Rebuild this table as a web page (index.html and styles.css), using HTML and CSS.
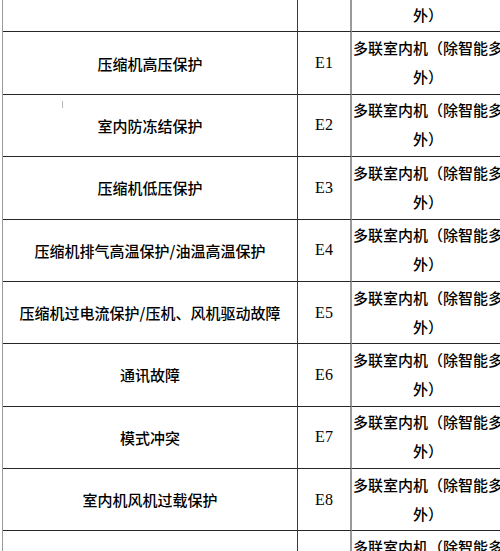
FILE: index.html
```html
<!DOCTYPE html>
<html lang="zh-CN">
<head>
<meta charset="utf-8">
<title>故障代码表</title>
<link rel="stylesheet" href="styles.css">
</head>
<body>
<div class="sheet">
  <div class="cell name"></div>
  <div class="cell code"></div>
  <div class="cell note">多联室内机（除智能多<br>外）</div>

  <div class="cell name">压缩机高压保护</div>
  <div class="cell code">E1</div>
  <div class="cell note">多联室内机（除智能多<br>外）</div>

  <div class="cell name mark">室内防冻结保护</div>
  <div class="cell code">E2</div>
  <div class="cell note">多联室内机（除智能多<br>外）</div>

  <div class="cell name">压缩机低压保护</div>
  <div class="cell code">E3</div>
  <div class="cell note">多联室内机（除智能多<br>外）</div>

  <div class="cell name">压缩机排气高温保护/油温高温保护</div>
  <div class="cell code">E4</div>
  <div class="cell note">多联室内机（除智能多<br>外）</div>

  <div class="cell name">压缩机过电流保护/压机、风机驱动故障</div>
  <div class="cell code">E5</div>
  <div class="cell note">多联室内机（除智能多<br>外）</div>

  <div class="cell name">通讯故障</div>
  <div class="cell code">E6</div>
  <div class="cell note">多联室内机（除智能多<br>外）</div>

  <div class="cell name">模式冲突</div>
  <div class="cell code">E7</div>
  <div class="cell note">多联室内机（除智能多<br>外）</div>

  <div class="cell name">室内机风机过载保护</div>
  <div class="cell code">E8</div>
  <div class="cell note">多联室内机（除智能多<br>外）</div>

  <div class="cell name"></div>
  <div class="cell code"></div>
  <div class="cell note">多联室内机（除智能多<br>外）</div>
</div>
</body>
</html>
```

FILE: styles.css
```css
html, body {
  margin: 0;
  padding: 0;
  overflow: hidden;
  background: #fff;
}

body {
  width: 500px;
  height: 551px;
  font-family: "Noto Sans CJK SC", "Noto Sans", sans-serif;
  font-size: 15px;
  font-weight: 500;
  color: #000;
}

.sheet {
  display: grid;
  grid-template-columns: 295px 54px 152px;
  grid-auto-rows: 62.375px;
  margin-top: -30px;
  margin-left: 2px;
  border-left: 1px solid #9a9a9a;
  width: max-content;
}

.cell {
  box-sizing: border-box;
  border-bottom: 1px solid #262626;
  display: flex;
  align-items: center;
  justify-content: center;
  text-align: center;
  white-space: nowrap;
}

.name {
  border-right: 1px solid #3a3a3a;
  position: relative;
}

.code {
  border-right: 2px solid #9a9a9a;
  font-family: "Liberation Serif", "DejaVu Serif", serif;
  font-size: 16px;
  font-weight: 400;
}

.note {
  line-height: 29px;
  padding-bottom: 2px;
}

.mark::before {
  content: "";
  position: absolute;
  left: 59px;
  top: 6px;
  width: 1px;
  height: 7px;
  background: #bbb;
}
```
